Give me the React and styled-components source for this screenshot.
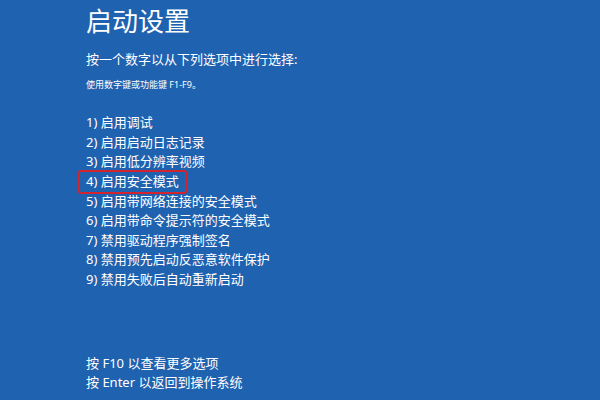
import styled, { createGlobalStyle, css } from "styled-components";

const GlobalStyle = createGlobalStyle`
    html, body {
        margin: 0;
        padding: 0;
        background: #1f62b0;
    }
    body {
        font-family: "Noto Sans", "Noto Sans CJK SC", sans-serif;
        color: #fff;
    }
`;

const options = [
    "1) 启用调试",
    "2) 启用启动日志记录",
    "3) 启用低分辨率视频",
    "4) 启用安全模式",
    "5) 启用带网络连接的安全模式",
    "6) 启用带命令提示符的安全模式",
    "7) 禁用驱动程序强制签名",
    "8) 禁用预先启动反恶意软件保护",
    "9) 禁用失败后自动重新启动",
];

export default function App() {
    return (
        <>
            <GlobalStyle />
            <Screen>
                <Title>启动设置</Title>
                <Prompt>按一个数字以从下列选项中进行选择:</Prompt>
                <Hint>使用数字键或功能键 F1-F9。</Hint>
                <OptionList>
                    {options.map((text, i) => (
                        <Option key={text} $marked={i === 3}>{text}</Option>
                    ))}
                </OptionList>
                <Footer>
                    <FooterLine>按 F10 以查看更多选项</FooterLine>
                    <FooterLine>按 Enter 以返回到操作系统</FooterLine>
                </Footer>
            </Screen>
        </>
    );
}

const Screen = styled.div`
    width: 600px;
    height: 400px;
    box-sizing: border-box;
    padding: 6px 0 0 86px;
    background: #1f62b0;
    overflow: hidden;
`;

const Title = styled.h1`
    margin: 0;
    font-size: 26px;
    line-height: 30px;
    font-weight: 400;
`;

const Prompt = styled.p`
    margin: 13px 0 0;
    font-size: 13px;
    line-height: 20px;
`;

const Hint = styled.p`
    margin: 9px 0 0;
    font-size: 9px;
    line-height: 14px;
`;

const OptionList = styled.div`
    margin: 21px 0 0;
    display: flex;
    flex-direction: column;
    align-items: flex-start;
`;

const Option = styled.div`
    font-size: 13px;
    line-height: 19.5px;
    ${({ $marked }) => $marked && css`
        margin: -1.5px 0 -2px -8px;
        padding: 0 6px;
        border: 2px solid #d3232f;
        border-radius: 3px;
    `}
`;

const Footer = styled.div`
    margin-top: 64.5px;
`;

const FooterLine = styled.p`
    margin: 0;
    font-size: 13px;
    line-height: 19.5px;
`;
